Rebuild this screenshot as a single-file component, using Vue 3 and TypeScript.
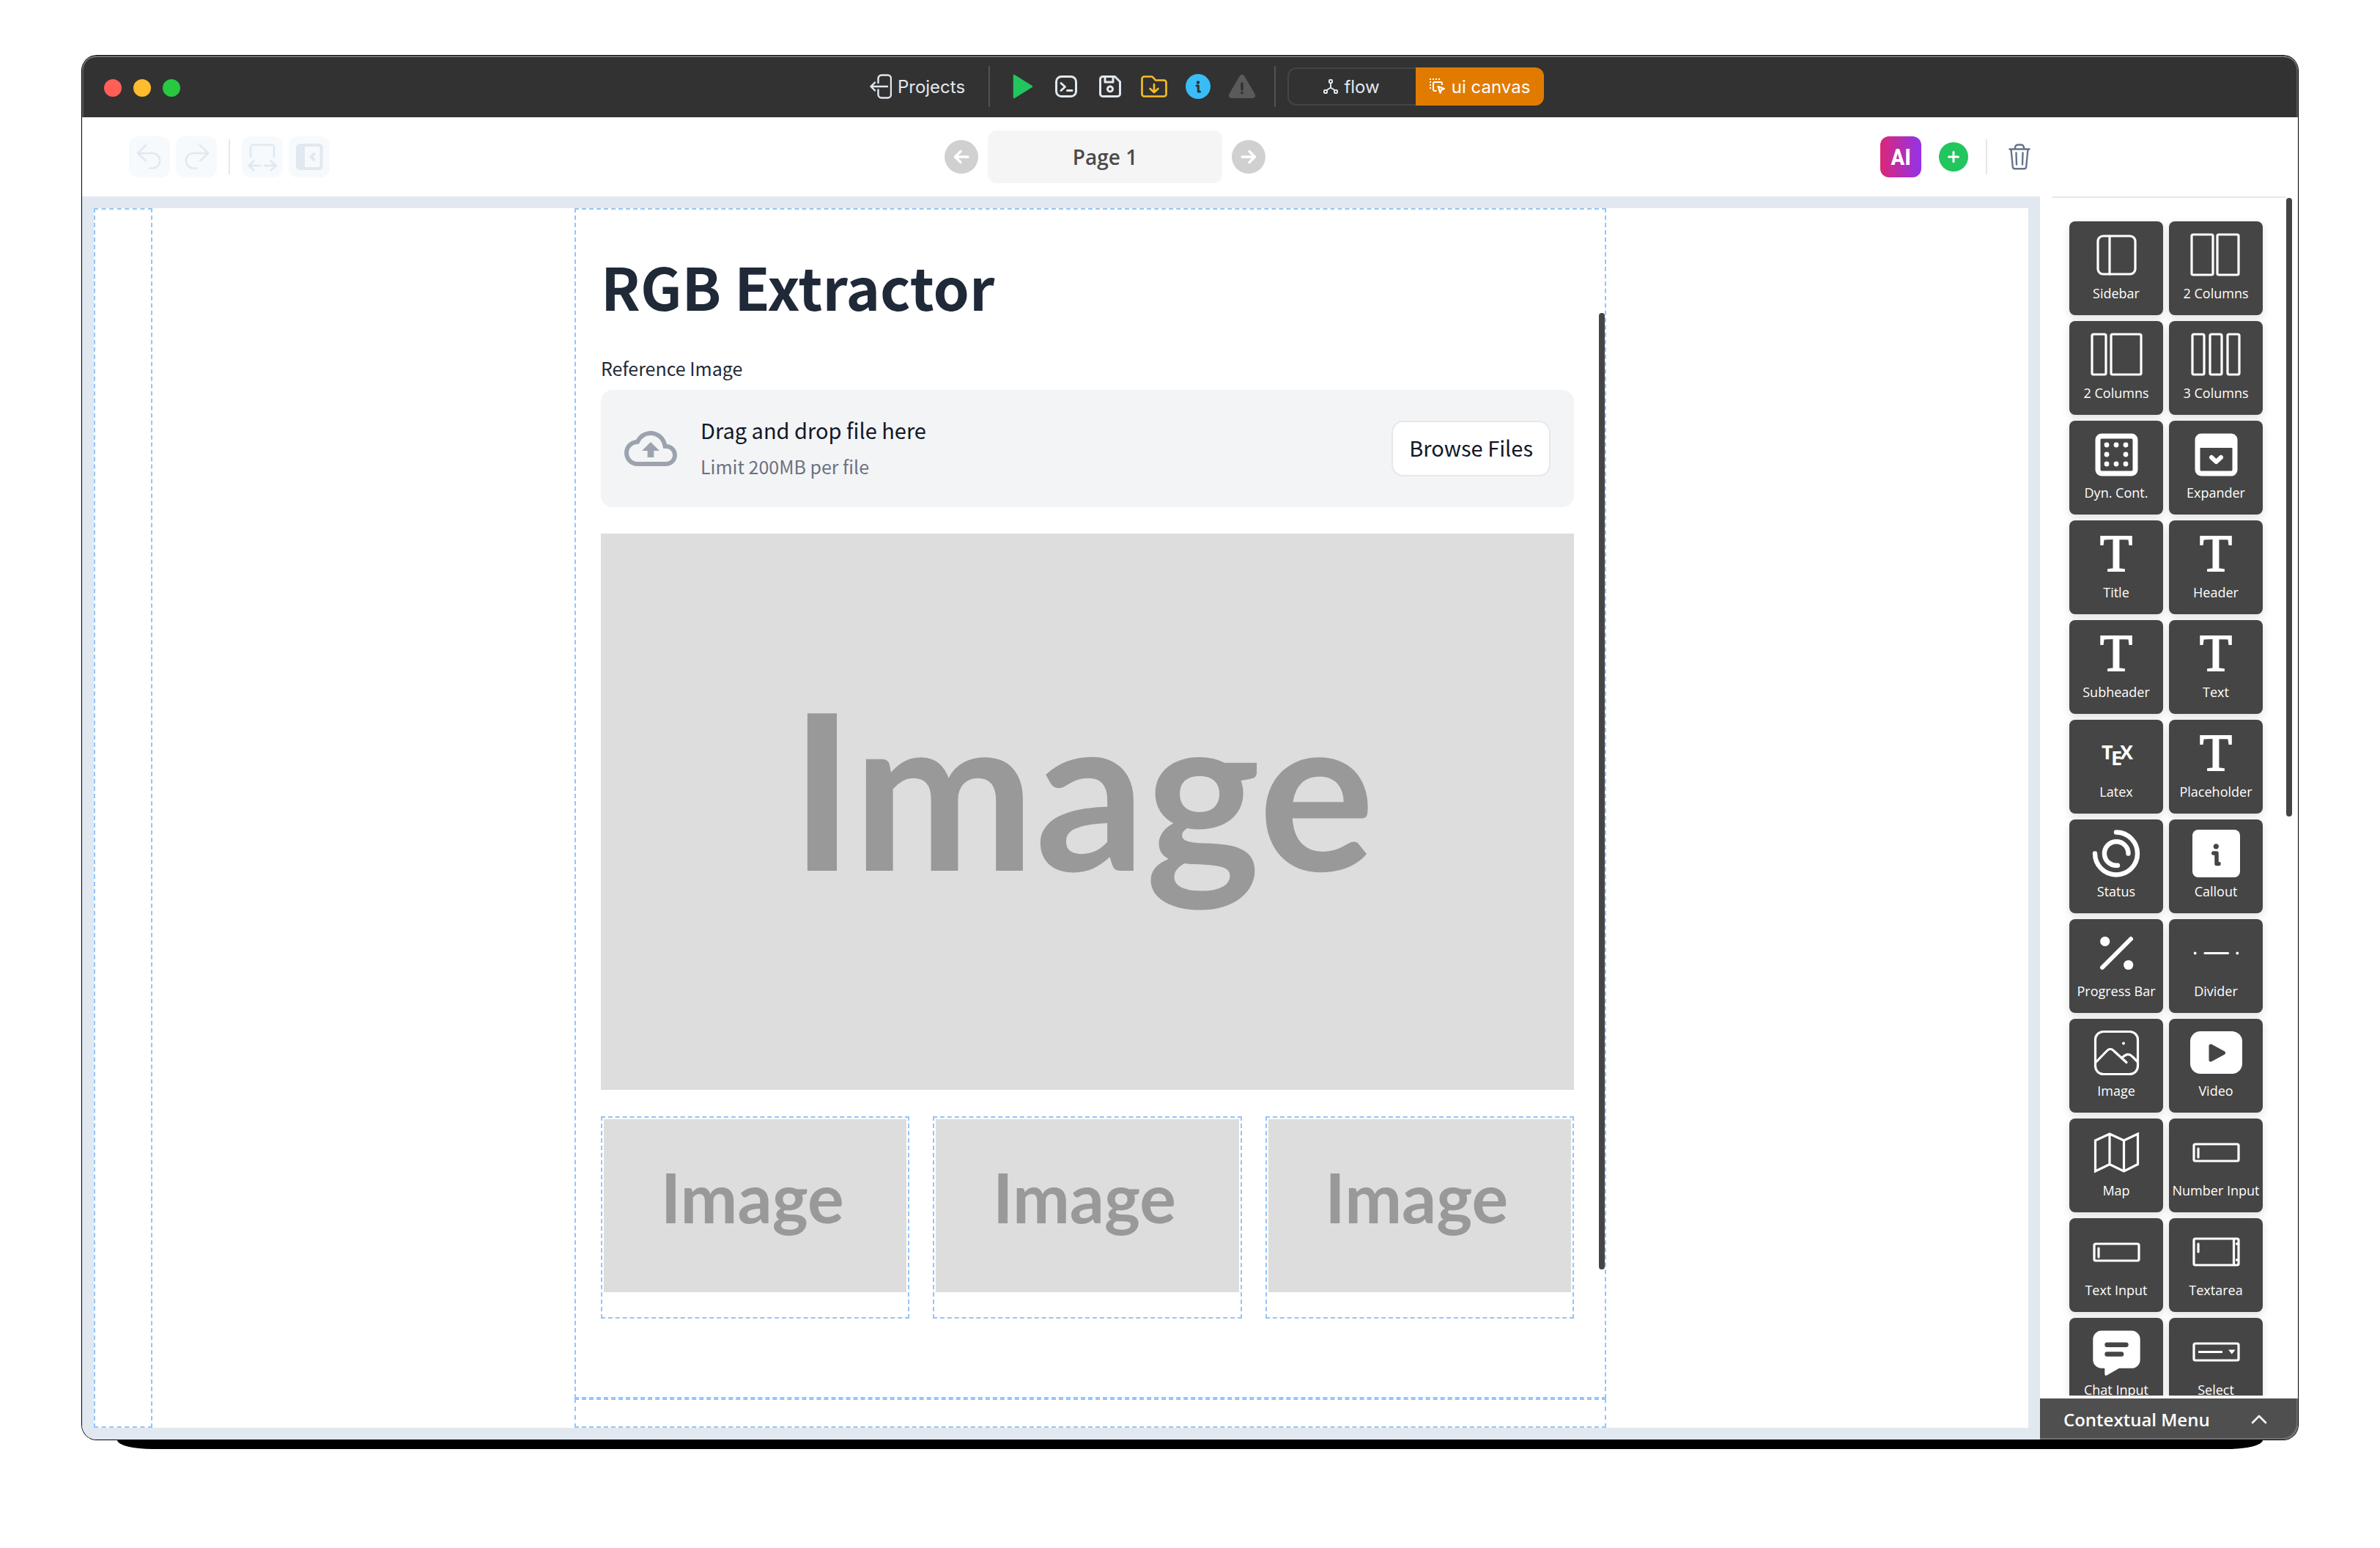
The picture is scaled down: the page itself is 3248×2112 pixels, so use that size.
<script setup lang="ts">
import { ref } from 'vue'

interface Tile {
  label: string
  icon: string
}

const box = (x: number, y: number, w: number, h: number, r = 2) =>
  `<rect x="${x}" y="${y}" width="${w}" height="${h}" rx="${r}"/>`

const solid = (inner: string) => `<g fill="#fff" stroke="none">${inner}</g>`

const letter = '<text x="64" y="69" text-anchor="middle" class="serif">T</text>'
const field = box(34, 35, 61, 23) + '<path d="M40 41v12"/>'

const tiles: Tile[] = [
  { label: 'Sidebar', icon: box(39, 20, 51, 52, 7) + '<path d="M55 20v52"/>' },
  { label: '2 Columns', icon: box(31, 18, 29, 55) + box(66, 18, 29, 55) },
  { label: '2 Columns', icon: box(31, 18, 19, 55) + box(57, 18, 41, 55) },
  { label: '3 Columns', icon: box(32, 18, 16, 55) + box(56, 18, 16, 55) + box(80, 18, 16, 55) },
  {
    label: 'Dyn. Cont.',
    icon:
      `<g stroke-width="7">${box(39, 21, 51, 51, 5)}</g>` +
      solid(
        [[51, 33], [64, 33], [77, 33], [51, 46], [77, 46], [51, 59], [64, 59], [77, 59]]
          .map(([x, y]) => `<circle cx="${x}" cy="${y}" r="3.4"/>`)
          .join('')
      ),
  },
  {
    label: 'Expander',
    icon: `<g stroke-width="7">${box(39, 21, 51, 51, 5)}</g><path d="M39 29h51" stroke-width="16" stroke-linecap="butt"/><path d="M58 50l6.500 6 6.500-6" stroke-width="6"/>`,
  },
  { label: 'Title', icon: letter },
  { label: 'Header', icon: letter },
  { label: 'Subheader', icon: letter },
  { label: 'Text', icon: letter },
  {
    label: 'Latex',
    icon: '<text x="44" y="54" class="tex">T</text><text x="57" y="62" class="tex">E</text><text x="69" y="54" class="tex">X</text>',
  },
  { label: 'Placeholder', icon: letter },
  {
    label: 'Status',
    icon: '<path d="M64 17.500a29 29 0 1 1-29 29M66 62.700a16.300 16.300 0 1 1 14.500-16.200" stroke-width="6.400"/>',
  },
  {
    label: 'Callout',
    icon:
      solid(box(32, 14, 65, 65, 8)) +
      '<g stroke="#454545" stroke-width="5.500"><path d="M60.800 46H65v14.400h3"/></g><circle cx="64.300" cy="36.800" r="3.600" fill="#454545" stroke="none"/>',
  },
  {
    label: 'Progress Bar',
    icon:
      solid('<circle cx="48.700" cy="30.400" r="6.600"/><circle cx="80.700" cy="62.500" r="6.600"/>') +
      '<path d="M45 66L84 27" stroke-width="6"/>',
  },
  {
    label: 'Divider',
    icon: '<path d="M49 46.500h31.500"/>' + solid('<circle cx="35.700" cy="46.500" r="1.900"/><circle cx="93.300" cy="46.500" r="1.900"/>'),
  },
  {
    label: 'Image',
    icon:
      box(35.5, 17.5, 58, 58, 11) +
      '<path d="M36 59.500L51 44q5-5.500 10 0L78 59.500M72 53q8-8 14-1.500l7 7"/>' +
      solid('<circle cx="74" cy="33.500" r="2"/>'),
  },
  {
    label: 'Video',
    icon:
      solid(box(29, 17, 71, 58, 14)) +
      '<path d="M57 37v19l17.500-9.500z" fill="#454545" stroke="#454545" stroke-width="5"/>',
  },
  {
    label: 'Map',
    icon: '<path stroke-linejoin="miter" d="M35.500 30L55 21l19.500 9 19-9v41.500l-19 9.500L55 62.500 35.500 72zM55 21v41.500M74.500 30v42"/>',
  },
  { label: 'Number Input', icon: field },
  { label: 'Text Input', icon: field },
  {
    label: 'Textarea',
    icon: box(34, 28, 61, 36) + '<path d="M40 35v11"/><path d="M88.500 29v34M91 35h4M91 57h4" stroke-linecap="butt"/>',
  },
  {
    label: 'Chat Input',
    icon:
      solid('<path d="M44 17.500h41a11.700 11.700 0 0 1 11.700 11.700v28A11.700 11.700 0 0 1 85 68.800H68L51 78.600q-2.700 1-2.700-2V68.800H44A11.700 11.700 0 0 1 32.300 57V29.200A11.700 11.700 0 0 1 44 17.500z"/>') +
      '<path d="M51.500 36.800h26M51.500 49.500h19.600" stroke="#454545" stroke-width="6.400"/>',
  },
  {
    label: 'Select',
    icon: box(34, 35, 61, 23) + '<path d="M40 46.500h33" stroke-linecap="butt"/>' + solid('<path d="M81 43.500h9.500l-4.700 6z"/>'),
  },
]

const view = ref<'flow' | 'canvas'>('canvas')
const thumbs = [1, 2, 3]
</script>

<template>
  <div class="desktop">
    <div class="frame">
      <div class="window">
        <header class="titlebar">
          <div class="lights">
            <span class="light red"></span>
            <span class="light yellow"></span>
            <span class="light green"></span>
          </div>
          <div class="titlebar-tools">
            <button class="projects">
              <svg class="line" width="30" height="34" viewBox="0 0 30 34">
                <path d="M11.500 12V6a4.500 4.500 0 0 1 4.500-4.500h8.500A4.500 4.500 0 0 1 29 6v22a4.500 4.500 0 0 1-4.500 4.500H16a4.500 4.500 0 0 1-4.500-4.500v-6.500M24 17H1.500M7 11.500L1.500 17 7 22.500" />
              </svg>
              <span class="caption">Projects</span>
            </button>
            <span class="rule dark"></span>
            <div class="run-tools">
              <button class="tool" aria-label="Run">
                <svg width="28" height="34" viewBox="0 0 28 34"><path d="M3 2v30l24-15z" fill="#22c55e" stroke="#22c55e" stroke-width="2.500" stroke-linejoin="round" /></svg>
              </button>
              <button class="tool" aria-label="Console">
                <svg class="line bold" width="30" height="30" viewBox="0 0 30 30"><rect x="1.500" y="1.500" width="27" height="27" rx="7" /><path d="M8 10.500l5.500 5L8 20.500M16.500 20.500H23" /></svg>
              </button>
              <button class="tool" aria-label="Save">
                <svg class="line bold" width="30" height="30" viewBox="0 0 30 30"><path d="M5 1.500h16.500l7 7V25a3.500 3.500 0 0 1-3.500 3.500H5A3.500 3.500 0 0 1 1.500 25V5A3.500 3.500 0 0 1 5 1.500zM8 2v7h11V2" /><circle cx="15" cy="18.500" r="3.500" /></svg>
              </button>
              <button class="tool" aria-label="Export to folder">
                <svg class="line amber" width="36" height="30" viewBox="0 0 36 30"><path d="M4.500 1.500H14q1.500 0 2.500 1l3.500 4h11.500A3 3 0 0 1 34.500 9.500V25.500A3 3 0 0 1 31.500 28.500H4.500A3 3 0 0 1 1.500 25.500V4.500A3 3 0 0 1 4.500 1.500zM18 12v11M12.500 18l5.500 5 5.500-5" /></svg>
              </button>
              <button class="tool" aria-label="Info">
                <svg width="34" height="34" viewBox="0 0 34 34"><circle cx="17" cy="17" r="17" fill="#38bdf8" /><circle cx="17" cy="11.500" r="2.200" fill="#323232" /><path d="M15 16h2.300v8H19.500" fill="none" stroke="#323232" stroke-width="3" stroke-linecap="round" stroke-linejoin="round" /></svg>
              </button>
              <button class="tool" aria-label="Warnings">
                <svg width="36" height="32" viewBox="0 0 36 32"><path d="M18 4L4 28h28z" fill="#5a5a5a" stroke="#5a5a5a" stroke-width="8" stroke-linejoin="round" /><path d="M18 12v8M18 24.500v.200" stroke="#323232" stroke-width="3.600" stroke-linecap="round" /></svg>
              </button>
            </div>
            <span class="rule dark"></span>
            <div class="switch">
              <button :class="{ active: view === 'flow' }" @click="view = 'flow'">
                <svg class="line thin" width="20" height="20" viewBox="0 0 20 20"><rect x="8" y="1" width="4" height="4" rx="1" /><rect x="1" y="15" width="4" height="4" rx="1" /><rect x="15" y="15" width="4" height="4" rx="1" /><path d="M10 5v6.500L4.500 15M10 11.500l5.500 3.500" /></svg>
                <span class="caption">flow</span>
              </button>
              <button :class="{ active: view === 'canvas' }" @click="view = 'canvas'">
                <svg width="22" height="22" viewBox="0 0 22 22" fill="none" stroke="#fff" stroke-width="2" stroke-linejoin="round"><path d="M0 1h15M1 4v11" stroke-dasharray="2 2" /><path d="M17 9V7a2 2 0 0 0-2-2H7a2 2 0 0 0-2 2v8a2 2 0 0 0 2 2h2.500" /><path d="M11.500 11l8.500 3-4 1.800-1.500 4.200z" fill="#fff" fill-opacity=".3" /></svg>
                <span class="caption">ui canvas</span>
              </button>
            </div>
          </div>
        </header>

        <div class="body">
          <main class="main">
            <div class="toolbar">
              <div class="group history">
                <button class="soft" aria-label="Undo" disabled>
                  <svg width="56" height="56" viewBox="0 0 56 56"><path d="M23 12L12 23l11 10.500M12 23h21a10.300 10.300 0 0 1 0 20.500h-5" /></svg>
                </button>
                <button class="soft" aria-label="Redo" disabled>
                  <svg width="56" height="56" viewBox="0 0 56 56"><path d="M33 12l11 11-11 10.500M44 23H23a10.300 10.300 0 0 0 0 20.500h5" /></svg>
                </button>
                <span class="rule light-rule"></span>
                <button class="soft" aria-label="Fit width" disabled>
                  <svg width="56" height="56" viewBox="0 0 56 56"><path d="M12 28.500V15.500a4 4 0 0 1 4-4h24a4 4 0 0 1 4 4v13M25 40H9.500M16.500 33.500L9.500 40l7 6.500M31 40h15.500M39.500 33.500l7 6.500-7 6.500" /></svg>
                </button>
                <button class="soft" aria-label="Collapse sidebar" disabled>
                  <svg width="56" height="56" viewBox="0 0 56 56"><rect x="12" y="12" width="32.500" height="32" rx="3.500" stroke-width="4" /><path d="M17 12v32" stroke-width="10" stroke-linecap="butt" /><path d="M34.500 24l-4 4 4 4" stroke-width="4" /></svg>
                </button>
              </div>
              <nav class="group pager">
                <button class="round" aria-label="Previous page">
                  <svg width="46" height="46" viewBox="0 0 46 46"><path d="M32 23H14.500M22 15.500L14.500 23l7.500 7.500" /></svg>
                </button>
                <button class="page-name">Page 1</button>
                <button class="round" aria-label="Next page">
                  <svg width="46" height="46" viewBox="0 0 46 46"><path d="M14 23h17.500M24 15.500l7.500 7.500-7.500 7.500" /></svg>
                </button>
              </nav>
              <div class="group actions">
                <button class="ai">AI</button>
                <button class="add" aria-label="Add page">
                  <svg width="40" height="40" viewBox="0 0 40 40"><path d="M20 13.500v13M13.500 20h13" stroke="#fff" stroke-width="3" stroke-linecap="round" /></svg>
                </button>
                <span class="rule light-rule"></span>
                <button class="delete" aria-label="Delete page">
                  <svg width="30" height="36" viewBox="0 0 30 36"><path d="M1.500 7.500h27M3.500 7.500l2.300 24a3 3 0 0 0 3 2.800h12.400a3 3 0 0 0 3-2.800l2.300-24M8.500 7.500l.700-3a4 4 0 0 1 3.800-3h4a4 4 0 0 1 3.800 3l.700 3M10.500 12.500l.500 16M19.500 12.500l-.500 16" /></svg>
                </button>
              </div>
            </div>

            <section class="canvas">
              <div class="slot side-slot"></div>
              <div class="stage">
                <div class="slot page">
                  <h1>RGB Extractor</h1>
                  <label class="field-label" for="reference-upload">Reference Image</label>
                  <div class="uploader">
                    <svg width="72" height="72" viewBox="0 0 24 24" fill="#9ca3af"><path d="M19.350 10.040C18.670 6.590 15.640 4 12 4 9.110 4 6.600 5.640 5.350 8.040 2.340 8.360 0 10.910 0 14c0 3.310 2.690 6 6 6h13c2.760 0 5-2.240 5-5 0-2.640-2.050-4.780-4.650-4.960zM19 18H6c-2.210 0-4-1.790-4-4 0-2.050 1.530-3.760 3.560-3.970l1.070-.110.500-.950C8.080 7.140 9.940 6 12 6c2.620 0 4.880 1.860 5.390 4.430l.300 1.500 1.530.110c1.560.100 2.780 1.410 2.780 2.960 0 1.650-1.350 3-3 3zM8 13h2.550v3h2.900v-3H16l-4-4z" /></svg>
                    <div class="hint">
                      <p>Drag and drop file here</p>
                      <small>Limit 200MB per file</small>
                    </div>
                    <button id="reference-upload" class="browse">Browse Files</button>
                  </div>
                  <div class="picture big"><span>Image</span></div>
                  <div class="columns">
                    <div v-for="n in thumbs" :key="n" class="slot column">
                      <div class="picture small"><span>Image</span></div>
                    </div>
                  </div>
                  <span class="thumb page-thumb"></span>
                </div>
                <div class="slot footer-slot"></div>
              </div>
            </section>
          </main>

          <aside class="side">
            <div class="palette">
              <div class="tiles">
                <button v-for="(tile, i) in tiles" :key="i" class="tile">
                  <svg width="128" height="84" viewBox="0 0 128 84" v-html="tile.icon"></svg>
                  <span>{{ tile.label }}</span>
                </button>
              </div>
              <span class="thumb palette-thumb"></span>
            </div>
            <button class="context">
              Contextual Menu
              <svg width="22" height="14" viewBox="0 0 22 14"><path d="M2 12l9-9 9 9" /></svg>
            </button>
          </aside>
        </div>
      </div>
    </div>
  </div>
</template>

<style>
body {
  background: #fff;
}

.tile svg text {
  fill: #fff;
  stroke: none;
}

.tile svg text.serif {
  stroke: #fff;
  stroke-width: 2;
  stroke-linejoin: miter;
  font: 72px 'Liberation Serif', serif;
}

.tile svg .tex {
  font: 700 27px 'Open Sans', sans-serif;
}
</style>

<style scoped>
* {
  box-sizing: border-box;
  margin: 0;
}

button {
  display: flex;
  align-items: center;
  justify-content: center;
  padding: 0;
  border: 0;
  background: none;
  color: inherit;
  font: inherit;
}

svg {
  display: block;
  flex: none;
}

.desktop {
  display: flex;
  height: 100vh;
  padding: 76px 112px 148px;
  font-family: 'Open Sans', 'Noto Sans', sans-serif;
}

.frame {
  position: relative;
  flex: 1;
  display: flex;
  min-width: 0;
}

.frame::after {
  content: '';
  position: absolute;
  top: 100%;
  left: 48px;
  right: 48px;
  height: 13px;
  background: #000;
  border-radius: 0 0 48px 48px / 0 0 12px 12px;
}

.window {
  flex: 1;
  display: flex;
  flex-direction: column;
  min-width: 0;
  overflow: hidden;
  background: #fff;
  border-radius: 20px;
  box-shadow: 0 0 0 1px #000;
}

.titlebar {
  display: flex;
  align-items: center;
  height: 84px;
  flex: none;
  padding: 0 88px 0 30px;
  background: #323232;
  border-radius: 20px 20px 0 0;
  box-shadow: inset 0 2px 0 #707070, inset 2px 0 0 #5a5a5a, inset -2px 0 0 #5a5a5a;
  color: #e2e8f0;
  font: 24px/32px Inter, Roboto, sans-serif;
}

.lights {
  display: flex;
  gap: 16px;
  padding-top: 4px;
}

.light {
  width: 24px;
  height: 24px;
  border-radius: 50%;
}

.red { background: #ff5f57; }
.yellow { background: #febc2e; }
.green { background: #28c840; }

.titlebar-tools {
  flex: 1;
  display: flex;
  align-items: center;
  justify-content: center;
}

.caption {
  padding-top: 2px;
}

.line {
  fill: none;
  stroke: #e2e8f0;
  stroke-width: 2.4;
  stroke-linecap: round;
  stroke-linejoin: round;
}

.line.bold { stroke-width: 3; }
.line.thin { stroke-width: 2; }
.line.amber { stroke: #fbbf24; stroke-width: 2.6; }

.projects {
  gap: 8px;
  margin-right: 32px;
}

.rule {
  width: 2px;
  flex: none;
}

.rule.dark {
  height: 56px;
  background: #525252;
}

.light-rule {
  height: 48px;
  background: #e5e7eb;
}

.run-tools {
  display: flex;
  gap: 20px;
  padding: 0 24px;
}

.tool {
  width: 40px;
  height: 40px;
}

.switch {
  display: flex;
  width: 350px;
  height: 52px;
  margin-left: 16px;
  overflow: hidden;
  border-radius: 12px;
  box-shadow: inset 0 0 0 2px #454545;
}

.switch button {
  flex: 1;
  gap: 8px;
}

.switch .active {
  background: #e17b00;
  color: #fff;
}

.body {
  flex: 1;
  display: flex;
  min-height: 0;
}

.main {
  flex: 1;
  display: flex;
  flex-direction: column;
  min-width: 0;
}

.toolbar {
  display: flex;
  align-items: center;
  justify-content: space-between;
  height: 108px;
  flex: none;
  padding-left: 64px;
}

.group {
  display: flex;
  align-items: center;
}

.history { gap: 8px; }

.history .rule { margin: 0 8px; }

.soft {
  border-radius: 12px;
  background: #f6fafd;
}

.soft svg {
  fill: none;
  stroke: #e2e8f0;
  stroke-width: 2.6;
  stroke-linecap: round;
  stroke-linejoin: round;
}

.pager { gap: 13px; }

.round {
  width: 46px;
  height: 46px;
  border-radius: 50%;
  background: #d0d0d0;
}

.round svg {
  fill: none;
  stroke: #fff;
  stroke-width: 3.4;
  stroke-linecap: round;
  stroke-linejoin: round;
}

.page-name {
  width: 320px;
  height: 72px;
  border-radius: 12px;
  background: #f5f5f5;
  color: #4a4a4a;
  font-size: 28px;
  font-weight: 600;
}

.ai {
  width: 56px;
  height: 56px;
  margin-right: 24px;
  border-radius: 12px;
  background: linear-gradient(90deg, #db2777, #9333ea);
  color: #fff;
  font: 700 32px/40px 'Liberation Sans Narrow', 'Roboto Condensed', 'DejaVu Sans Condensed', sans-serif;
}

.add {
  margin-right: 24px;
  border-radius: 50%;
  background: #22c55e;
}

.delete {
  width: 56px;
  height: 56px;
  margin-left: 16px;
}

.delete svg {
  fill: none;
  stroke: #64748b;
  stroke-width: 2.4;
  stroke-linecap: round;
  stroke-linejoin: round;
}

.canvas {
  flex: 1;
  display: flex;
  min-height: 0;
  border: 16px solid #e2e8f0;
}

.slot {
  border: 2px dashed #93c5fd;
}

.side-slot {
  width: 80px;
  flex: none;
}

.stage {
  flex: 1;
  display: flex;
  flex-direction: column;
  align-items: center;
}

.page {
  position: relative;
  flex: 1;
  width: 55%;
  padding: 56px 42px 0 34px;
  font-family: 'Noto Sans CJK SC', 'Noto Sans', sans-serif;
  color: #1f2937;
}

.page h1 {
  margin-bottom: 42px;
  font-size: 79px;
  font-weight: 700;
  line-height: 96px;
}

.field-label {
  display: block;
  margin-bottom: 8px;
  font-size: 25px;
  line-height: 44px;
}

.uploader {
  display: flex;
  align-items: center;
  gap: 32px;
  padding: 32px;
  margin-bottom: 36px;
  border-radius: 16px;
  background: #f3f4f6;
  color: #111827;
}

.hint {
  flex: 1;
  padding-bottom: 4px;
}

.hint p {
  margin-bottom: 8px;
  font-size: 29px;
  line-height: 44px;
}

.hint small {
  display: block;
  color: #6b7280;
  font-size: 25px;
  line-height: 40px;
}

.browse {
  height: 76px;
  padding: 0 22px 4px;
  border: 2px solid #e5e7eb;
  border-radius: 16px;
  background: #fff;
  font-size: 29px;
}

.picture {
  display: flex;
  align-items: center;
  justify-content: center;
  aspect-ratio: 7 / 4;
  background: #ddd;
  color: #999;
  font-family: Lato, sans-serif;
  font-weight: 700;
  line-height: 1;
}

.big {
  padding: 0 14px 68px 0;
  margin-bottom: 36px;
  font-size: 297px;
}

.small {
  padding: 0 8px 22px 0;
  font-size: 93px;
}

.columns {
  display: flex;
  gap: 32px;
}

.column {
  flex: 1;
  padding: 2px 2px 34px;
}

.thumb {
  position: absolute;
  width: 8px;
  border-radius: 4px;
  background: #454545;
}

.page-thumb {
  top: 141px;
  right: 0;
  height: 1305px;
}

.footer-slot {
  width: 55%;
  height: 40px;
}

.side {
  display: flex;
  flex-direction: column;
  width: 352px;
  flex: none;
  padding-top: 108px;
}

.palette {
  position: relative;
  flex: 1;
  min-height: 0;
  margin: 0 16px 4px;
  border-top: 2px solid #e5e7eb;
}

.palette-thumb {
  top: 0;
  right: -8px;
  height: 844px;
}

.tiles {
  display: grid;
  grid-template-columns: repeat(2, 128px);
  gap: 8px;
  height: 100%;
  overflow: hidden;
  padding: 32px 24px 0;
}

.tile {
  flex-direction: column;
  justify-content: flex-start;
  height: 128px;
  border-radius: 8px;
  background: #454545;
  box-shadow: 0 4px 12px rgba(0, 0, 0, 0.12);
  color: #fff;
  font-size: 18px;
  line-height: 28px;
  white-space: nowrap;
}

.tile svg {
  fill: none;
  stroke: #fff;
  stroke-width: 3.2;
  stroke-linecap: round;
  stroke-linejoin: round;
}

.context {
  justify-content: space-between;
  height: 56px;
  flex: none;
  padding: 0 42px 0 32px;
  background: #4f4f4f;
  border-radius: 0 0 20px 0;
  box-shadow: inset -2px -2px 0 #707070;
  color: #fff;
  font-size: 24px;
  font-weight: 600;
}

.context svg {
  fill: none;
  stroke: #fff;
  stroke-width: 2.6;
  stroke-linecap: round;
  stroke-linejoin: round;
}
</style>
